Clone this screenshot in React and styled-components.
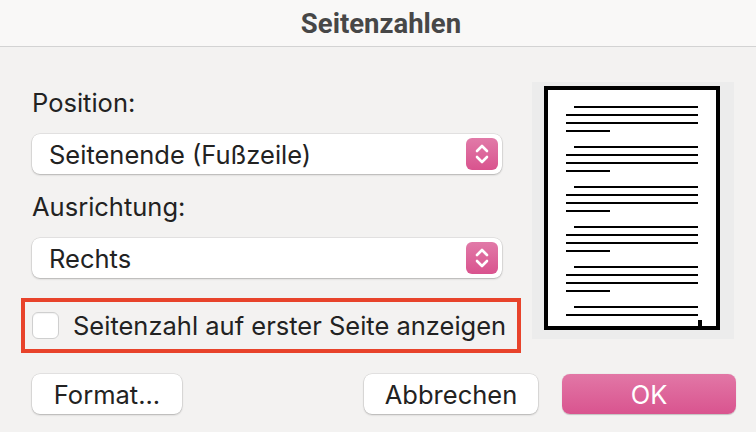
import styled, { createGlobalStyle } from 'styled-components';

const GlobalStyle = createGlobalStyle`
  html, body {
    margin: 0;
    padding: 0;
    background: #f3f2f1;
  }
  body {
    font-family: Inter, "Noto Sans", sans-serif;
    color: #222;
  }
`;

const Dialog = styled.div`
  width: 756px;
  height: 432px;
  background: #f3f2f1;
  display: flex;
  flex-direction: column;
  overflow: hidden;
`;

const TitleBar = styled.div`
  height: 46px;
  flex: none;
  display: flex;
  align-items: center;
  justify-content: center;
  background: #f9f8f7;
  border-bottom: 1px solid #d3d3d3;
`;

const Title = styled.h1`
  margin: 0 0 0 6px;
  font-family: Roboto, Inter, sans-serif;
  font-weight: 700;
  font-size: 27.5px;
  color: #474747;
`;

const Body = styled.div`
  display: flex;
  gap: 30px;
  padding: 35px 0 0 32px;
`;

const LeftColumn = styled.div`
  width: 470px;
  display: flex;
  flex-direction: column;
  padding-top: 6px;
`;

const Label = styled.div`
  font-size: 25.5px;
  line-height: 30px;
  margin-bottom: ${p => p.$gap}px;
  color: #222;
`;

const Select = styled.div`
  height: 40px;
  border-radius: 8px;
  background: #fff;
  box-shadow: 0 0 0 0.5px rgba(0, 0, 0, 0.12), 0 1px 2px rgba(0, 0, 0, 0.22);
  display: flex;
  align-items: center;
  justify-content: space-between;
  padding: 0 4px 0 17px;
  margin-bottom: ${p => p.$gap}px;
  font-size: 25.5px;
  color: #222;
`;

const Stepper = styled.div`
  width: 32px;
  height: 32px;
  border-radius: 6px;
  background: linear-gradient(#e17aa8, #d9538e);
  display: flex;
  align-items: center;
  justify-content: center;
`;

const CheckRow = styled.label`
  margin-left: -11px;
  width: 500px;
  height: 55px;
  box-sizing: border-box;
  border: 4px solid #e8432b;
  display: flex;
  align-items: center;
  gap: 14px;
  padding-left: 7px;
  font-size: 25.5px;
  color: #222;
`;

const CheckBox = styled.span`
  width: 27px;
  height: 27px;
  box-sizing: border-box;
  border-radius: 6px;
  background: #fff;
  border: 1px solid #cfcfcf;
  box-shadow: inset 0 1px 1px rgba(0, 0, 0, 0.05);
`;

const Preview = styled.div`
  width: 202px;
  height: 257px;
  box-sizing: border-box;
  background: #ececec;
  padding: 4px 0 0 12px;
`;

const ButtonRow = styled.div`
  display: flex;
  align-items: center;
  padding: 21px 20px 0 32px;
`;

const Button = styled.button`
  width: ${p => p.$width}px;
  height: 40px;
  margin-left: ${p => p.$offset || 0}px;
  border: none;
  border-radius: 8px;
  font-family: Inter, sans-serif;
  font-size: 25.5px;
  color: ${p => (p.$primary ? '#fff' : '#222')};
  background: ${p => (p.$primary ? 'linear-gradient(#e277a6, #d9548f)' : '#fff')};
  box-shadow: ${p =>
    p.$primary
      ? '0 0.5px 1px rgba(0, 0, 0, 0.2)'
      : '0 0 0 0.5px rgba(0, 0, 0, 0.12), 0 1px 2px rgba(0, 0, 0, 0.22)'};
  padding: 0;
`;

const Spacer = styled.div`
  flex: 1;
`;

function StepperIcon() {
  return (
    <Stepper>
      <svg width="18" height="24" viewBox="0 0 18 24" fill="none" stroke="#fff" strokeWidth="2.6" strokeLinecap="round" strokeLinejoin="round">
        <path d="M4 9 L9 4 L14 9" />
        <path d="M4 15 L9 20 L14 15" />
      </svg>
    </Stepper>
  );
}

function PagePreview() {
  const groups = [21, 61, 101, 141, 181, 221];
  const lines = [];
  groups.forEach((y, i) => {
    lines.push([30, y]);
    lines.push([22, y + 8, 154]);
    if (i === groups.length - 1) return;
    lines.push([22, y + 16, 154]);
    lines.push([22, y + 24, 66]);
  });
  return (
    <svg width="176" height="244" viewBox="0 0 176 244">
      <rect x="2" y="2" width="172" height="240" fill="#fff" stroke="#000" strokeWidth="4" />
      {lines.map(([x, y, x2], i) => (
        <rect key={i} x={x} y={y - 1} width={(x2 || 154) - x} height="2" fill="#000" />
      ))}
      <rect x="154" y="234" width="4" height="6" fill="#000" />
    </svg>
  );
}

export default function App() {
  return (
    <>
      <GlobalStyle />
      <Dialog>
        <TitleBar>
          <Title>Seitenzahlen</Title>
        </TitleBar>
        <Body>
          <LeftColumn>
            <Label $gap={16}>Position:</Label>
            <Select $gap={18}>
              Seitenende (Fußzeile)
              <StepperIcon />
            </Select>
            <Label $gap={16}>Ausrichtung:</Label>
            <Select $gap={20}>
              Rechts
              <StepperIcon />
            </Select>
            <CheckRow>
              <CheckBox />
              Seitenzahl auf erster Seite anzeigen
            </CheckRow>
          </LeftColumn>
          <Preview>
            <PagePreview />
          </Preview>
        </Body>
        <ButtonRow>
          <Button $width={150}>Format...</Button>
          <Spacer />
          <Button $width={174}>Abbrechen</Button>
          <Button $width={174} $offset={24} $primary>OK</Button>
        </ButtonRow>
      </Dialog>
    </>
  );
}
